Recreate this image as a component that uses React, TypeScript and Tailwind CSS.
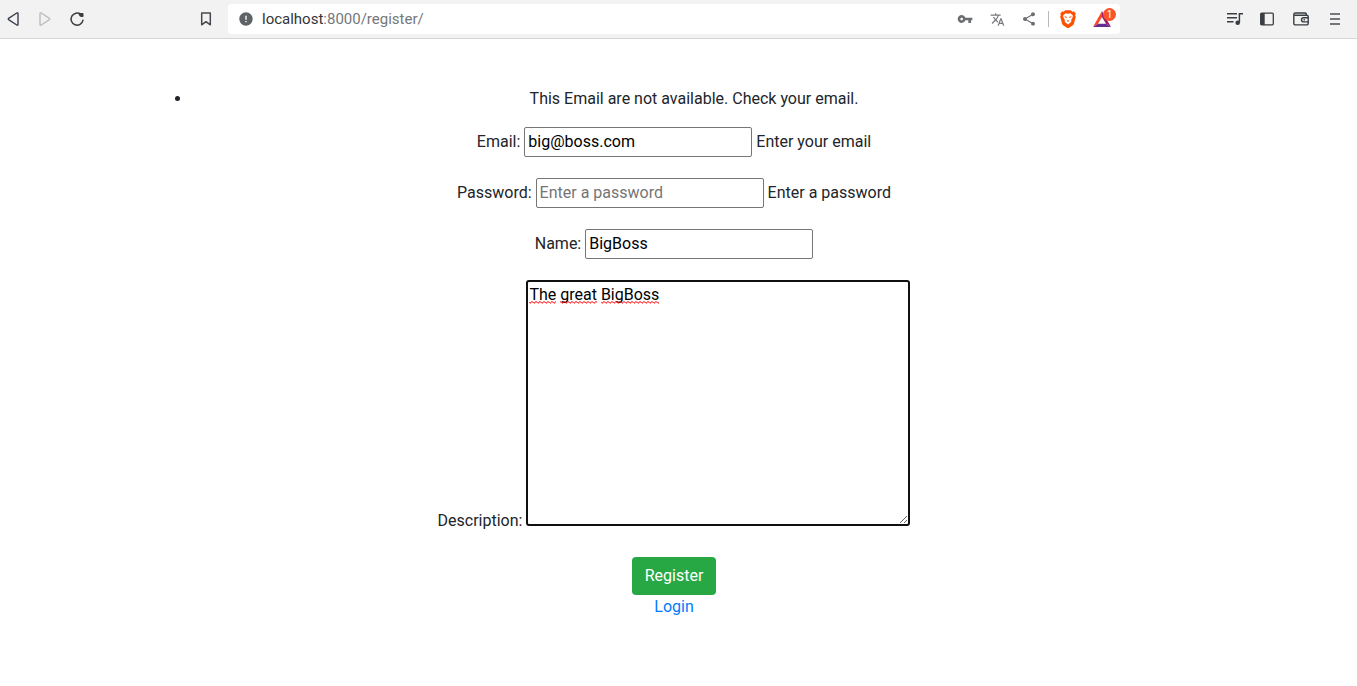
import { MdError, MdShare, MdTranslate, MdVpnKey } from "react-icons/md";

const iconButton = "flex h-6 w-6 items-center justify-center";
const fieldRow = "flex items-center justify-center gap-1";
const textField =
  "h-[30px] w-[228px] rounded-xs border border-[#767676] bg-white px-[3px] pb-[2px] text-black outline-none placeholder:text-[#757575]";

function BackIcon() {
  return (
    <svg width="16" height="16" viewBox="0 0 16 16" fill="none" stroke="#3b3e4f" strokeWidth="1.4" strokeLinejoin="round">
      <path d="M13 2.6v10.8c0 .7-.7 1-1.2.6L3.600 8.600c-.4-.3-.4-.9 0-1.200L11.800 2c.5-.4 1.200-.1 1.200.6Z" />
    </svg>
  );
}

function ForwardIcon() {
  return (
    <svg width="16" height="16" viewBox="0 0 16 16" fill="none" stroke="#bdbdc0" strokeWidth="1.4" strokeLinejoin="round">
      <path d="M3 2.600v10.800c0 .7.7 1 1.200.6l8.200-5.400c.4-.3.4-.9 0-1.200L4.200 2C3.700 1.600 3 1.900 3 2.600Z" />
    </svg>
  );
}

function ReloadIcon() {
  return (
    <svg width="16" height="16" viewBox="0 0 16 16" fill="none" stroke="#3a3d42" strokeWidth="1.5" strokeLinecap="round">
      <path d="M11.800 3.400A6 6 0 1 0 14 9.200" />
      <path d="M10.200 2h3.400c.6 0 .9.3.9.9v2.300c0 .5-.3.8-.8.8h-1.200c-1.500 0-2.900-1.600-2.900-3.200 0-.5.200-.8.600-.8Z" fill="#3a3d42" stroke="none" />
    </svg>
  );
}

function BookmarkIcon() {
  return (
    <svg width="16" height="16" viewBox="0 0 16 16" fill="none" stroke="#46494f" strokeWidth="1.5" strokeLinejoin="round">
      <path d="M3.700 2.100h8.600v11.700L8 10.700l-4.300 3.100Z" />
    </svg>
  );
}

function ShieldsIcon() {
  return (
    <svg width="16" height="18" viewBox="0 0 16 18">
      <path d="M5.200.2h5.600l1.500 1.600 1.700-.2 1.700 2-.5 1.600.6 1.500-2 7.200-.9 1.300-4.200 2.700h-1.400l-4.200-2.700-.9-1.300-2-7.200.6-1.500L.3 3.600l1.700-2 1.700.2Z" fill="#ff5000" />
      <path d="m8 3.700 2.300-.5 2.600 2.400-.3 2-1.500 2.300.4 1.300-1.300 1.500L8 14.600l-2.200-1.900-1.300-1.500.4-1.300-1.500-2.300-.3-2 2.600-2.400Z" fill="#fff" />
      <path d="m4.300 6.200 2.400.6.4 1-1.900-.2ZM11.700 6.200l-2.400.6-.4 1 1.900-.2ZM6.700 10.800 8 10.300l1.300.5L8 11.900Z" fill="#ff5000" />
    </svg>
  );
}

function RewardsIcon() {
  return (
    <svg width="18" height="16" viewBox="0 0 18 16">
      <path d="M9 0 0 16l5-3.200L9 6Z" fill="#ff4724" />
      <path d="M9 0v6l4 6.800 5 3.200Z" fill="#9e1f63" />
      <path d="M0 16h18l-5-3.200H5Z" fill="#662d91" />
    </svg>
  );
}

function PlaylistIcon() {
  return (
    <svg width="16" height="14" viewBox="0 0 16 14" fill="none" stroke="#3a3d42" strokeWidth="1.5">
      <path d="M0 1.700h10M0 5.700h10M0 9.700h6.500M12.400 10.500V1.700H16" />
      <circle cx="10.700" cy="10.800" r="2.300" fill="#3a3d42" stroke="none" />
    </svg>
  );
}

function SidebarIcon() {
  return (
    <svg width="14" height="14" viewBox="0 0 14 14">
      <rect x=".7" y="1.200" width="12.600" height="11.600" rx="1" fill="none" stroke="#3a3d42" strokeWidth="1.3" />
      <path d="M.7 1h4v12h-4Z" fill="#3a3d42" />
    </svg>
  );
}

function WalletIcon() {
  return (
    <svg width="16" height="14" viewBox="0 0 16 14" fill="none" stroke="#3a3d42" strokeWidth="1.4">
      <path d="M15.200 5.600V4.800c0-.9-.6-1.500-1.500-1.500H1.600M15.200 9.900v1.500c0 .9-.6 1.500-1.500 1.500H2.500c-1 0-1.700-.7-1.700-1.700V2.700C.8 1.700 1.500 1 2.500 1H12c.9 0 1.500.7 1.500 2.300" />
      <path d="M15.200 5.700h-4.600a2.100 2.100 0 0 0 0 4.200h4.600Z" />
      <path d="M10.600 7.800h1.300" />
    </svg>
  );
}

function MenuIcon() {
  return (
    <svg width="10" height="14" viewBox="0 0 10 14" stroke="#4b4d55" strokeWidth="1.6">
      <path d="M0 2h10M0 7h10M0 12h10" />
    </svg>
  );
}

function SpellingMarks() {
  return (
    <svg aria-hidden="true" className="pointer-events-none absolute top-[21px] left-[3px]" width="131" height="3" viewBox="0 0 131 3">
      <defs>
        <pattern id="wave" width="4" height="3" patternUnits="userSpaceOnUse">
          <path d="M-1 .3 1 2.300 3 .5 5 2.300" fill="none" stroke="#f00" strokeWidth="1" />
        </pattern>
      </defs>
      <path d="M0 0h27v3H0ZM31 0h37v3H31ZM72 0h58v3H72Z" fill="url(#wave)" />
    </svg>
  );
}

function Toolbar() {
  return (
    <header className="flex h-[39px] items-start border-b border-[#d5d5d5] bg-[#f2f2f2] pt-1">
      <nav aria-label="Navigation" className="flex h-[30px] w-[228px] shrink-0 items-center gap-2 pr-[10px] pl-px">
        <button type="button" aria-label="Back" className={iconButton}><BackIcon /></button>
        <button type="button" aria-label="Forward" disabled className={iconButton}><ForwardIcon /></button>
        <button type="button" aria-label="Reload" className={iconButton}><ReloadIcon /></button>
        <button type="button" aria-label="Bookmark" className={`${iconButton} ml-auto`}><BookmarkIcon /></button>
      </nav>
      <div className="flex h-[30px] min-w-0 flex-1 items-center rounded-sm bg-white pr-1 pl-[10px]">
        <MdError className="size-4 shrink-0 text-[#5f6368]" />
        <button
          type="button"
          className="ml-2 min-w-0 flex-1 truncate text-left font-[Roboto,sans-serif] text-[15px] leading-5 text-[#75777b]"
        >
          <span className="text-[#333539]">localhost</span>:8000/register/
        </button>
        <div className="flex items-center gap-2">
          <button type="button" aria-label="Passwords" className={iconButton}><MdVpnKey className="size-4 text-[#6c6e72]" /></button>
          <button type="button" aria-label="Translate" className={iconButton}><MdTranslate className="size-[15px] text-[#77797d]" /></button>
          <button type="button" aria-label="Share" className={iconButton}><MdShare className="size-4 text-[#6c6e72]" /></button>
        </div>
        <span className="ml-[7px] h-4 w-px bg-[#b8b8b8]" />
        <button type="button" aria-label="Shields" className={`${iconButton} ml-[7px]`}><ShieldsIcon /></button>
        <button type="button" aria-label="Rewards" className="relative ml-3 flex h-[30px] w-6 items-center pl-px">
          <RewardsIcon />
          <span className="absolute top-1 right-0 flex size-[13px] items-center justify-center rounded-full bg-[#fb542b] font-[Roboto,sans-serif] text-[10px] leading-3 text-white">1</span>
        </button>
      </div>
      <div className="flex h-[30px] w-[237px] shrink-0 items-center justify-end gap-[10px] pr-[10px]">
        <button type="button" aria-label="Playlist" className="flex h-6 w-5 items-center justify-center"><PlaylistIcon /></button>
        <button type="button" aria-label="Sidebar" className={iconButton}><SidebarIcon /></button>
        <button type="button" aria-label="Wallet" className={iconButton}><WalletIcon /></button>
        <button type="button" aria-label="Menu" className={iconButton}><MenuIcon /></button>
      </div>
    </header>
  );
}

export default function App() {
  return (
    <div className="min-h-screen bg-white font-[Roboto,sans-serif] text-base text-[#212529]">
      <Toolbar />
      <main className="pt-12 pr-[161px] pb-12 pl-[152px]">
        <ul className="mb-4 list-disc pl-10 text-center">
          <li>This Email are not available. Check your email.</li>
        </ul>
        <form className="flex flex-col gap-[21px]" onSubmit={(e) => e.preventDefault()}>
          <div className={fieldRow}>
            <label htmlFor="email">Email:</label>
            <input id="email" type="email" defaultValue="big@boss.com" className={textField} />
            <span>Enter your email</span>
          </div>
          <div className={fieldRow}>
            <label htmlFor="password">Password:</label>
            <input id="password" type="password" placeholder="Enter a password" className={textField} />
            <span>Enter a password</span>
          </div>
          <div className={fieldRow}>
            <label htmlFor="name">Name:</label>
            <input id="name" type="text" defaultValue="BigBoss" className={textField} />
          </div>
          <div className="flex h-[246px] items-end justify-center gap-1">
            <label htmlFor="description" className="-mb-[7px]">Description:</label>
            <div className="relative">
              <textarea
                id="description"
                spellCheck={false}
                defaultValue="The great BigBoss"
                className="block h-[246px] w-96 rounded-[3px] border-2 border-[#101010] bg-white p-px text-black outline-none"
              />
              <SpellingMarks />
            </div>
          </div>
          <div className="flex flex-col items-center pt-[10px]">
            <button type="submit" className="h-[38px] rounded-sm bg-[#28a745] px-[13px] text-white">Register</button>
            <a href="#login" className="text-[#007bff]">Login</a>
          </div>
        </form>
      </main>
    </div>
  );
}
